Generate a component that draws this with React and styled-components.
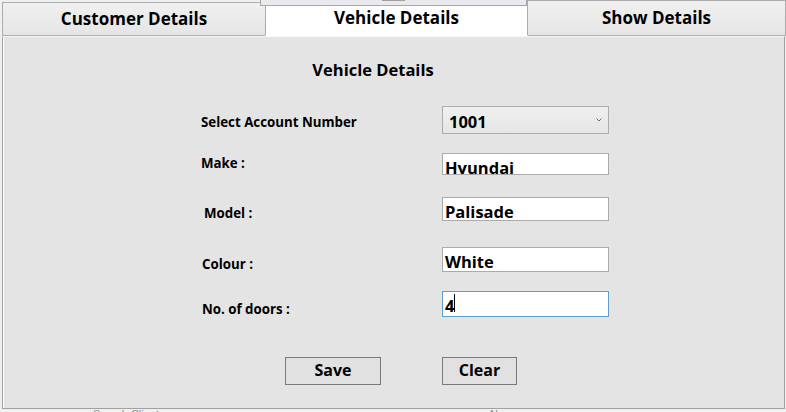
import styled, { createGlobalStyle } from "styled-components";

const GlobalStyle = createGlobalStyle`
  body {
    margin: 0;
    background: #f0f0f0;
    font-family: "Open Sans", "Noto Sans", sans-serif;
    color: #000;
  }
`;

const fields = [
  { label: "Make :", value: "Hyundai", gap: 21, height: 22, labelTop: 2 },
  { label: "Model :", value: "Palisade", gap: 22, height: 23, labelTop: 8, indent: 3 },
  { label: "Colour :", value: "White", gap: 27, height: 22, labelTop: 9, indent: 1 },
  { label: "No. of doors :", value: "4", gap: 22, height: 22, labelTop: 10, indent: 1, focused: true },
];

const App = () => {
  return (
    <Screen>
      <GlobalStyle />
      <TabBar>
        <Tab $top={2} $width={264}>Customer Details</Tab>
        <Tab $active $top={0} $width={263}>Vehicle Details</Tab>
        <Tab $top={0} $width={259}>Show Details</Tab>
        {/* bit of a window lying above the tabs */}
        <Overlap>
          <OverlapThumb />
        </Overlap>
      </TabBar>

      <Panel>
        <Title>Vehicle Details</Title>

        <Row $gap={26} $height={26}>
          <Label $top={8}>Select Account Number</Label>
          <Combo>
            <span>1001</span>
            <svg width="6" height="4" viewBox="0 0 6 4">
              <polyline points="0.5,0.5 3,3 5.5,0.5" fill="none" stroke="#707070" strokeWidth="1" />
            </svg>
          </Combo>
        </Row>

        {fields.map((f) => (
          <Row key={f.label} $gap={f.gap} $height={f.height}>
            <Label $top={f.labelTop} $indent={f.indent}>
              {f.label}
            </Label>
            <TextBox $focused={f.focused}>
              {f.value}
              {f.focused && <Caret />}
            </TextBox>
          </Row>
        ))}

        <Buttons>
          <Button $width={96}>Save</Button>
          <Button $width={75}>Clear</Button>
        </Buttons>
      </Panel>

      <Behind>
        <BehindText $left={93}>Search Client:</BehindText>
        <BehindText $left={490}>Name</BehindText>
      </Behind>
    </Screen>
  );
};

export default App;

const Screen = styled.div`
  width: 786px;
  height: 412px;
  overflow: hidden;
  display: flex;
  flex-direction: column;
`;

const TabBar = styled.div`
  position: relative;
  display: flex;
  align-items: flex-end;
  height: 36px;
  padding-left: 2px;
  flex-shrink: 0;
`;

const Tab = styled.div`
  box-sizing: border-box;
  width: ${(p) => p.$width}px;
  height: ${(p) => 36 - p.$top}px;
  margin-left: -1px;
  &:first-child {
    margin-left: 0;
  }
  border: 1px solid #acacac;
  border-bottom: 1px solid ${(p) => (p.$active ? "#ffffff" : "#acacac")};
  background: ${(p) =>
    p.$active ? "#ffffff" : "linear-gradient(#f0f0f0, #e5e5e5)"};
  display: flex;
  align-items: center;
  justify-content: center;
  padding-bottom: 1px;
  font-size: 17px;
  font-weight: 700;
  position: relative;
  z-index: ${(p) => (p.$active ? 1 : 0)};
`;

const Overlap = styled.div`
  position: absolute;
  left: 260px;
  top: 0;
  width: 267px;
  height: 6px;
  box-sizing: border-box;
  background: #e9e9ee;
  border: 1px solid #a8a8a8;
  border-top: none;
  z-index: 2;
`;

const OverlapThumb = styled.div`
  margin-left: 121px;
  width: 23px;
  height: 1px;
  background: #a0a0a0;
`;

const Panel = styled.div`
  box-sizing: border-box;
  height: 373px;
  margin: 0 1px 0 2px;
  border: 1px solid #a0a0a0;
  border-top-color: #f8f8f8;
  box-shadow: inset 1px 0 0 #ffffff;
  background: #e4e4e4;
  padding: 23px 0 0 198px;
  flex-shrink: 0;
`;

const Title = styled.div`
  margin-left: -198px;
  padding-right: 41px;
  text-align: center;
  font-size: 16.5px;
  font-weight: 700;
  line-height: 20px;
`;

const Row = styled.div`
  display: grid;
  grid-template-columns: 241px 167px;
  height: ${(p) => p.$height}px;
  margin-top: ${(p) => p.$gap}px;
  align-items: stretch;
`;

const Label = styled.div`
  margin-top: ${(p) => p.$top}px;
  padding-left: ${(p) => p.$indent || 0}px;
  font-size: 13.3px;
  font-weight: 700;
  line-height: 16px;
  white-space: nowrap;
`;

const Combo = styled.div`
  box-sizing: border-box;
  border: 1px solid #acacac;
  background: linear-gradient(#f0f0f0, #e5e5e5);
  display: flex;
  align-items: center;
  justify-content: space-between;
  padding: 3px 6px 0 6px;
  font-size: 16.5px;
  font-weight: 700;

  svg {
    margin-top: -4px;
  }
`;

const TextBox = styled.div`
  position: relative;
  box-sizing: border-box;
  border: 1px solid ${(p) => (p.$focused ? "#5a9ee0" : "#ababab")};
  background: #ffffff;
  overflow: hidden;
  padding: 3px 0 0 2px;
  font-size: 16.5px;
  font-weight: 700;
  line-height: 22px;
  white-space: nowrap;
`;

const Caret = styled.span`
  display: inline-block;
  width: 1px;
  height: 18px;
  background: #000;
  vertical-align: top;
  margin-top: -1px;
`;

const Buttons = styled.div`
  display: flex;
  gap: 61px;
  margin-top: 44px;
  padding-left: 84px;
`;

const Button = styled.button`
  box-sizing: border-box;
  width: ${(p) => p.$width}px;
  height: 28px;
  border: 1px solid #7a7a7a;
  background: #e1e1e1;
  font-family: "Open Sans", "Noto Sans", sans-serif;
  font-size: 16px;
  font-weight: 700;
  color: #000;
  padding: 0 0 2px;
  border-radius: 0;
`;

const Behind = styled.div`
  position: relative;
  flex: 1;
  background: #f0f0f0;
  overflow: hidden;
`;

const BehindText = styled.span`
  position: absolute;
  left: ${(p) => p.$left}px;
  top: -1px;
  font-family: "Liberation Sans", sans-serif;
  font-size: 11px;
  color: #8a8a8a;
`;
